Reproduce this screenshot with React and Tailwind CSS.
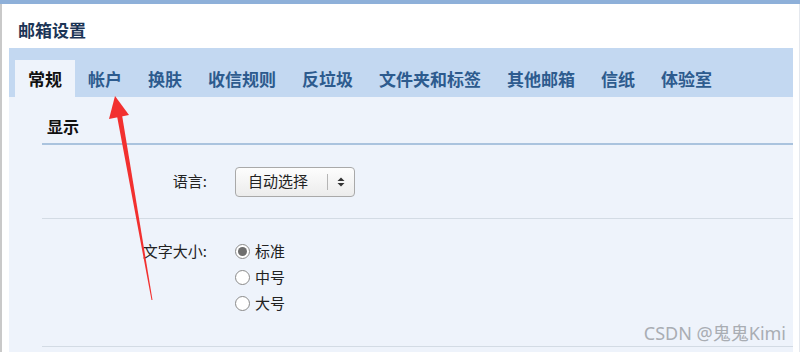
import React from 'react';

const font = { fontFamily: '"Noto Sans CJK SC", "Noto Sans", sans-serif' };

const tabs = ['常规', '帐户', '换肤', '收信规则', '反垃圾', '文件夹和标签', '其他邮箱', '信纸', '体验室'];

function Radio({ checked, label }) {
  return (
    <label className="flex items-center h-[26px] text-[15px] text-[#222]">
      <span className="w-[15px] h-[15px] rounded-full border border-[#8a8a8a] bg-white flex items-center justify-center mr-[5px]">
        {checked && <span className="w-[9px] h-[9px] rounded-full bg-[#6e6e6e]" />}
      </span>
      {label}
    </label>
  );
}

export default function App() {
  return (
    <div className="relative w-[800px] h-[352px] overflow-hidden bg-white" style={font}>
      <div className="h-[4px] bg-[#8eb0d9]" />
      <div className="flex h-[348px]">
        <div className="w-[2px] bg-[#c9c9c9]" />
        <div className="flex-1 flex flex-col pl-[7px] pr-[6px]">
          <div className="h-[44px] flex items-center pt-[8px] pl-[9px] text-[17px] font-bold text-[#1c3556]">邮箱设置</div>
          <div className="h-[49px] bg-[#c3d8f1] flex items-end pl-[6px]">
            {tabs.map((t, i) => (
              <div
                key={t}
                className={
                  i === 0
                    ? 'h-[37px] px-[13px] flex items-center bg-[#eef3fb] text-[17px] font-bold text-[#111]'
                    : 'h-[37px] px-[13px] flex items-center text-[17px] font-bold text-[#2d5b8e]'
                }
              >
                {t}
              </div>
            ))}
          </div>
          <div className="flex-1 bg-[#eef3fb] pl-[33px]">
            <div className="h-[48px] flex items-end pb-[5px] pl-[5px] border-b-2 border-[#aac3de] text-[16px] font-bold text-[#111]">
              显示
            </div>
            <div className="h-[74px] flex items-center border-b border-[#d3dbe4]">
              <div className="w-[193px] text-right pr-[28px] text-[15px] text-[#222]">语言:</div>
              <div className="w-[120px] h-[30px] rounded-[4px] border border-[#a9a9a9] bg-gradient-to-b from-[#fdfdfd] to-[#ececec] flex items-center text-[15px] text-[#222]">
                <span className="pl-[12px] w-[91px]">自动选择</span>
                <span className="w-px h-[16px] bg-[#b5b5b5]" />
                <svg width="8" height="10" viewBox="0 0 8 10" className="ml-[9px]">
                  <path d="M4 0.5 L7.5 4 H0.5 Z" fill="#333" />
                  <path d="M4 9.5 L7.5 6 H0.5 Z" fill="#333" />
                </svg>
              </div>
            </div>
            <div className="h-[128px] flex pt-[19px] border-b border-[#d3dbe4]">
              <div className="w-[193px] text-right pr-[28px] text-[15px] text-[#222] leading-[26px]">文字大小:</div>
              <div className="flex flex-col">
                <Radio checked label="标准" />
                <Radio label="中号" />
                <Radio label="大号" />
              </div>
            </div>
          </div>
        </div>
        <div className="w-[1px] bg-[#e4e8ee]" />
      </div>
      <div className="absolute right-[14px] top-[320px] text-[18px] text-[#a9adb3]" style={{ fontFamily: '"Noto Sans", "Noto Sans CJK SC", sans-serif' }}>
        CSDN @鬼鬼Kimi
      </div>
      <svg className="absolute left-0 top-0 pointer-events-none" width="800" height="352">
        <polygon points="152.5,300 151.5,300 117,116 122,115" fill="#f2302f" />
        <polygon points="115,96 129,115 109,119" fill="#f2302f" />
      </svg>
    </div>
  );
}
